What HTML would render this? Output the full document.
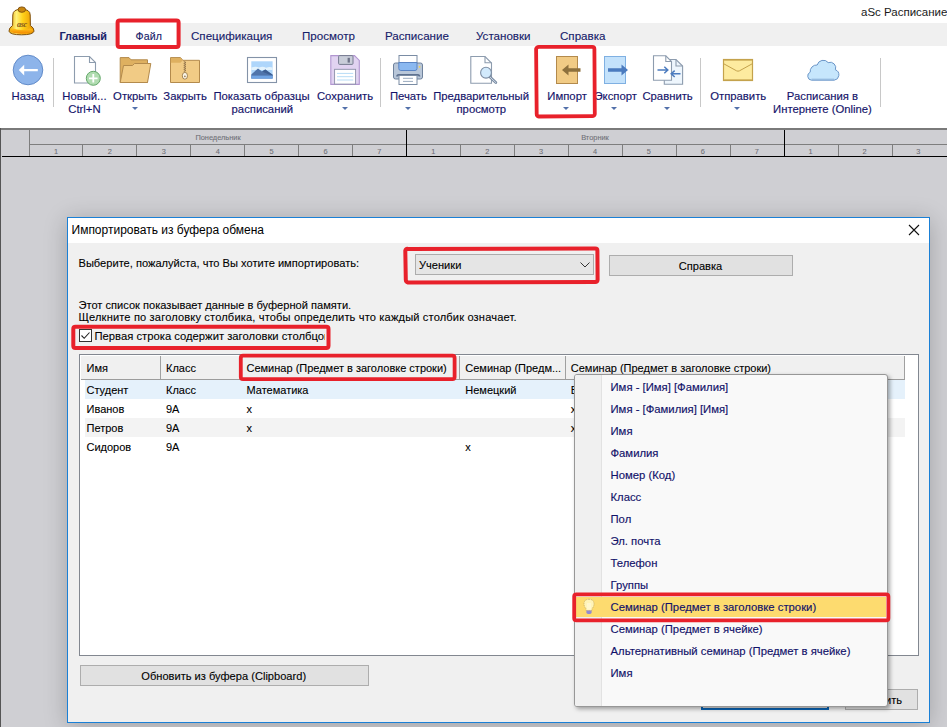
<!DOCTYPE html>
<html><head><meta charset="utf-8">
<style>
*{margin:0;padding:0;box-sizing:border-box}
html,body{width:947px;height:727px;overflow:hidden;background:#cfcfd3;font-family:"Liberation Sans",sans-serif}
.a{position:absolute}
.t{position:absolute;white-space:nowrap;line-height:1}
.c{transform:translateX(-50%)}
#titlebar{left:0;top:0;width:947px;height:23px;background:#fff}
#tabs{left:0;top:23px;width:947px;height:23px;background:#f0f0f0}
#ribbon{left:0;top:46px;width:947px;height:82px;background:#fff}
.tab{font-size:12px;color:#16206a;-webkit-text-stroke:0.12px #16206a}
.rl{font-size:11.3px;color:#14136a;text-align:center;-webkit-text-stroke:0.15px #14136a}
.sep{position:absolute;width:1px;background:#c8c8c8;top:58px;height:49px}
.arr{position:absolute;width:0;height:0;border-left:3.5px solid transparent;border-right:3.5px solid transparent;border-top:3.5px solid #5270aa;margin-left:0.5px;margin-top:1px}
.red{position:absolute;border:3px solid #e8212b;border-radius:3px}
.gl{position:absolute;background:#7e7e7e}
.gn{font-size:7.4px;color:#707178;-webkit-text-stroke:0.1px #707178}
.dt{font-size:11.1px;color:#000;-webkit-text-stroke:0.1px #000}
.lt{font-size:11px;color:#000;-webkit-text-stroke:0.1px #000}
.mt{font-size:11.3px;color:#12126a;-webkit-text-stroke:0.15px #12126a}
</style></head><body>
<div id="titlebar" class="a"></div>
<div id="tabs" class="a"></div>
<div id="ribbon" class="a"></div>
<!-- TITLE -->
<svg class="a" style="left:0;top:0" width="40" height="40" viewBox="0 0 40 40">
 <defs>
  <linearGradient id="bg1" x1="0" y1="0" x2="1" y2="0">
   <stop offset="0" stop-color="#e9a400"/><stop offset="0.3" stop-color="#fff17a"/><stop offset="0.55" stop-color="#ffd21a"/><stop offset="1" stop-color="#e69000"/>
  </linearGradient>
  <linearGradient id="bg2" x1="0" y1="0" x2="0" y2="1">
   <stop offset="0" stop-color="#ffc21a"/><stop offset="1" stop-color="#f28400"/>
  </linearGradient>
 </defs>
 <path d="M12.8 15 Q12.8 9.2 21.5 9.2 Q30.2 9.2 30.2 15 L30.4 25.5 Q34.3 28 34 31.2 Q33 34.8 21.5 34.8 Q10 34.8 9 31.2 Q8.7 28 12.6 25.5 Z" fill="url(#bg1)" stroke="#7e4e0c" stroke-width="1"/>
 <path d="M9.6 30.2 Q12 33.8 21.5 33.8 Q31 33.8 33.4 30.2 Q31.5 29 30 28.6 Q26 30 21.5 30 Q17 30 13 28.6 Q11.5 29 9.6 30.2Z" fill="url(#bg2)"/>
 <ellipse cx="21.8" cy="9.6" rx="3.8" ry="2.7" fill="#c8860f" stroke="#7a4a08" stroke-width="0.9"/>
 <text x="21.8" y="27" font-size="8.2" font-family="Liberation Serif" fill="#86561e" text-anchor="middle" font-weight="bold" font-style="italic" letter-spacing="-0.4">asc</text>
</svg>
<div class="t" style="left:861px;top:7.4px;font-size:11.5px;color:#1a1a1a">aSc Расписание</div>

<!-- TABS -->
<div class="t tab" style="left:59.5px;top:31.3px;font-weight:bold;color:#16226a;font-size:10.8px">Главный</div>
<div class="a" style="left:118px;top:23px;width:60px;height:23px;background:#fff"></div>
<div class="t tab" style="left:135.5px;top:30.5px;font-size:10.6px;letter-spacing:0.1px">Файл</div>
<div class="t tab" style="left:191px;top:29.5px;font-size:11.6px">Спецификация</div>
<div class="t tab" style="left:302px;top:29.5px;font-size:11.6px">Просмотр</div>
<div class="t tab" style="left:385px;top:29.5px;font-size:11.6px">Расписание</div>
<div class="t tab" style="left:476px;top:29.5px;font-size:11.6px">Установки</div>
<div class="t tab" style="left:560px;top:29.5px;font-size:11.6px">Справка</div>

<!-- RIBBON ICONS -->
<svg class="a" style="left:0;top:46px" width="947" height="82" viewBox="0 46 947 82">
 <!-- back -->
 <circle cx="28" cy="70" r="14.8" fill="#8db4ea" stroke="#5a84c4" stroke-width="0.9"/>
 <path d="M18.8 70.1 L24.2 64.8 L24.2 69 L37.8 69 L37.8 71.3 L24.2 71.3 L24.2 75.4 Z" fill="#fff"/>
 <!-- new -->
 <path d="M74.5 56.5 L89.5 56.5 L95.5 62.5 L95.5 83 L74.5 83 Z" fill="#fff" stroke="#8d9cae" stroke-width="1.1"/>
 <path d="M89.5 56.5 L89.5 62.5 L95.5 62.5" fill="none" stroke="#8d9cae" stroke-width="1.1"/>
 <circle cx="93.3" cy="78.3" r="7" fill="#b0dcb0" stroke="#64a86a" stroke-width="1"/>
 <path d="M93.3 74 V82.6 M89 78.3 H97.6" stroke="#fff" stroke-width="1.8"/>
 <!-- open folder -->
 <path d="M120.2 82.5 L120.2 57.6 L129 57.6 L131 59.8 L147.5 59.8 L147.5 82.5 Z" fill="#deb060" stroke="#b38a4c" stroke-width="1"/>
 <path d="M120.2 82.5 L123.5 65.5 L132.5 65.5 L134.5 63.5 L150.8 63.5 L147.5 82.5 Z" fill="#f1cb85" stroke="#b38a4c" stroke-width="1"/>
 <!-- zip folder -->
 <path d="M170.5 82.5 L170.5 57.6 L180.5 57.6 L182.8 60.3 L199.5 60.3 L199.5 82.5 Z" fill="#f1cb85" stroke="#b38a4c" stroke-width="1"/>
 <path d="M170.8 58 L180.5 58 L182.8 60.5 L180.3 62.8 L170.8 62.8 Z" fill="#deb060"/>
 <path d="M183.8 61.5 L186 62.5 L183.8 63.5 L186 64.5 L183.8 65.5 L186 66.5 L183.8 67.5 L186 68.5 L183.8 69.5 L186 70.5 L183.8 71.5" fill="none" stroke="#8f7048" stroke-width="0.9"/>
 <ellipse cx="184.9" cy="75.8" rx="2.6" ry="3.4" fill="#fbf6e8" stroke="#9a7a4a" stroke-width="0.9"/>
 <circle cx="184.9" cy="76.4" r="0.8" fill="#8f7048"/>
 <!-- picture -->
 <rect x="247.5" y="57.5" width="29" height="25" fill="#fff" stroke="#8493a8" stroke-width="1.1"/>
 <rect x="251.3" y="61.3" width="21.3" height="17.3" fill="#aed6fb"/>
 <path d="M251.3 67.5 Q256 65.8 259 67.5 Q263 66 266 67.8 Q269.5 66.3 272.6 67.5 L272.6 70 L251.3 70 Z" fill="#e3f3fd"/>
 <path d="M251.3 74.5 L258 68.6 L262 71.5 L265.3 69.5 L272.6 74.8 L272.6 78.6 L251.3 78.6 Z" fill="#4f74ab"/>
 <path d="M262 71.5 L265.3 69.5 L272.6 74.8 L272.6 76 Z" fill="#3d5f93"/>
 <rect x="251.3" y="75.6" width="21.3" height="3" fill="#6fa3e3"/>
 <!-- floppy -->
 <path d="M330.8 55.6 L354.5 55.6 L359.3 60.4 L359.3 84.4 L330.8 84.4 Z" fill="#e1d3f1" stroke="#b196d0" stroke-width="1.1"/>
 <rect x="338.6" y="55.6" width="14.4" height="8.8" rx="1" fill="#c9cdd9" stroke="#767b90" stroke-width="1"/>
 <rect x="347.6" y="57.8" width="2.3" height="4.8" fill="#6e7388"/>
 <rect x="334.6" y="69.3" width="21" height="14.8" fill="#fff" stroke="#8b8fa8" stroke-width="0.9"/>
 <path d="M337 73.4 H353.2 M337 76.7 H353.2 M337 80 H353.2" stroke="#b7dcf6" stroke-width="1"/>
 <!-- printer -->
 <rect x="393.5" y="63" width="29" height="16" rx="2" fill="#b9c7d9" stroke="#6f829c" stroke-width="1"/>
 <rect x="399" y="55.5" width="18" height="7.5" fill="#fff" stroke="#7a8ca4" stroke-width="1"/>
 <path d="M398.8 62.5 H417 V68.5 Q417 70.5 415 70.5 H400.8 Q398.8 70.5 398.8 68.5 Z" fill="#8ab8f0" stroke="#5a84c4" stroke-width="1"/>
 <circle cx="419.6" cy="66.8" r="0.9" fill="#f7d54a"/>
 <path d="M397 76.5 Q397 74.8 398.8 74.8 H417.8 Q419.5 74.8 419.5 76.5" stroke="#5f7290" stroke-width="1.7" fill="none"/>
 <rect x="399" y="75.5" width="18" height="9" fill="#fff" stroke="#7a8ca4" stroke-width="1"/>
 <path d="M403 78.3 H413 M403 81.4 H413" stroke="#9aabbf" stroke-width="1"/>
 <!-- preview -->
 <path d="M470.8 56.5 L485 56.5 L491.5 63 L491.5 83.3 L470.8 83.3 Z" fill="#fff" stroke="#8d9cae" stroke-width="1.1"/>
 <path d="M485 56.5 L485 62.8 L491.5 62.8" fill="none" stroke="#8d9cae" stroke-width="1.1"/>
 <path d="M490.2 77.3 L495.8 82.6" stroke="#7d8ea4" stroke-width="2.8" stroke-linecap="round"/>
 <path d="M490.2 77.3 L495.8 82.6" stroke="#c9d6e4" stroke-width="1" stroke-linecap="round"/>
 <circle cx="486" cy="72.7" r="5.4" fill="#d2eafc" stroke="#7d8ea4" stroke-width="1.1"/>
 <!-- import -->
 <rect x="556.5" y="56.5" width="21" height="27" fill="#f1cb85" stroke="#b38a4c" stroke-width="1"/>
 <path d="M562 70 L568.5 64.5 L568.5 68.3 L580.5 68.3 L580.5 71.8 L568.5 71.8 L568.5 75.5 Z" fill="#8d703c"/>
 <!-- export -->
 <rect x="604.5" y="56.5" width="21" height="27" fill="#c4e2fb" stroke="#7fb0e2" stroke-width="1"/>
 <path d="M628 70 L621.5 64.5 L621.5 68.3 L608 68.3 L608 71.8 L621.5 71.8 L621.5 75.5 Z" fill="#4b7bbf"/>
 <!-- compare -->
 <path d="M664.3 59.5 L676 59.5 L682.6 66 L682.6 84.2 L664.3 84.2 Z" fill="#eef6fd" stroke="#8d9cae" stroke-width="1.1"/>
 <path d="M676 59.5 L676 66 L682.6 66" fill="none" stroke="#8d9cae" stroke-width="1.1"/>
 <path d="M653.5 55.8 L665.8 55.8 L671.5 61.5 L671.5 80.3 L653.5 80.3 Z" fill="#fff" stroke="#8d9cae" stroke-width="1.1"/>
 <path d="M665.8 55.8 L665.8 61.5 L671.5 61.5" fill="none" stroke="#8d9cae" stroke-width="1.1"/>
 <path d="M657.5 70 H667.5 M664.3 66.8 L667.8 70 L664.3 73.2" fill="none" stroke="#4b7bbf" stroke-width="1.5"/>
 <path d="M680.5 73.8 H671.5 M674.7 70.6 L671.2 73.8 L674.7 77" fill="none" stroke="#4b7bbf" stroke-width="1.5"/>
 <!-- envelope -->
 <rect x="723.5" y="59.5" width="29" height="21" fill="#fdeb9f" stroke="#c4a24c" stroke-width="1.2"/>
 <rect x="724" y="60" width="28" height="1" fill="#d9bd6a"/><rect x="724" y="79" width="28" height="1" fill="#d9bd6a"/>
 <path d="M723.8 63.8 L736.5 70.8 Q738 71.6 739.5 70.8 L752.2 63.8" fill="none" stroke="#c4a24c" stroke-width="1"/>
 <!-- cloud -->
 <path d="M811.5 80.2 A4.2 4.2 0 0 1 810.2 72.2 A6.5 6.5 0 0 1 817.2 65 A6.3 6.3 0 0 1 828.2 62.6 A5.6 5.6 0 0 1 835.4 69.8 A5.4 5.4 0 0 1 834.2 80.2 Z" fill="#c6e6fc" stroke="#6b96c8" stroke-width="1"/><path d="M811.5 79.2 H834.2" stroke="#8fb2da" stroke-width="1"/>
</svg>
<div class="sep" style="left:53px"></div>
<div class="sep" style="left:380px"></div>
<div class="sep" style="left:700px"></div>
<div class="sep" style="left:880px"></div>

<!-- RIBBON LABELS -->
<div class="t rl c" style="left:27.7px;top:90.6px">Назад</div>
<div class="t rl c" style="left:84.4px;top:90.6px">Новый...</div>
<div class="t rl c" style="left:84.4px;top:104.4px">Ctrl+N</div>
<div class="t rl c" style="left:135.3px;top:90.6px">Открыть</div>
<div class="arr" style="left:131px;top:106px"></div>
<div class="t rl c" style="left:185.1px;top:90.6px">Закрыть</div>
<div class="t rl c" style="left:261.5px;top:90.6px">Показать образцы</div>
<div class="t rl c" style="left:262.3px;top:104.4px">расписаний</div>
<div class="t rl c" style="left:345px;top:90.6px">Сохранить</div>
<div class="arr" style="left:341px;top:106px"></div>
<div class="t rl c" style="left:408.4px;top:90.6px">Печать</div>
<div class="arr" style="left:404px;top:106px"></div>
<div class="t rl c" style="left:481.1px;top:90.6px">Предварительный</div>
<div class="t rl c" style="left:481.3px;top:104.4px">просмотр</div>
<div class="t rl c" style="left:567.1px;top:90.6px">Импорт</div>
<div class="arr" style="left:562.5px;top:106px"></div>
<div class="t rl c" style="left:615.7px;top:90.6px">Экспорт</div>
<div class="arr" style="left:610.5px;top:106px"></div>
<div class="t rl c" style="left:667.6px;top:90.6px">Сравнить</div>
<div class="arr" style="left:663.5px;top:106px"></div>
<div class="t rl c" style="left:738.2px;top:90.6px">Отправить</div>
<div class="arr" style="left:733.5px;top:106px"></div>
<div class="t rl c" style="left:822.5px;top:90.6px">Расписания в</div>
<div class="t rl c" style="left:822.5px;top:104.4px">Интернете (Online)</div>

<!-- GRID -->
<div class="a" style="left:0;top:128px;width:947px;height:2px;background:#7a7a7a"></div>
<div class="a" style="left:0;top:128px;width:1px;height:599px;background:#555"></div>
<div class="gl" style="left:29px;top:130px;width:1px;height:26px"></div>
<div class="gl" style="left:29px;top:144px;width:918px;height:1px"></div>
<div class="a" style="left:2px;top:156px;width:945px;height:1px;background:#000"></div>
<div class="a" style="left:406px;top:130px;width:1px;height:27px;background:#000"></div>
<div class="a" style="left:784px;top:130px;width:1px;height:27px;background:#000"></div>
<div class="gl" style="left:82px;top:144px;width:1px;height:12px"></div><div class="gl" style="left:136px;top:144px;width:1px;height:12px"></div><div class="gl" style="left:190px;top:144px;width:1px;height:12px"></div><div class="gl" style="left:244px;top:144px;width:1px;height:12px"></div><div class="gl" style="left:298px;top:144px;width:1px;height:12px"></div><div class="gl" style="left:352px;top:144px;width:1px;height:12px"></div><div class="gl" style="left:460px;top:144px;width:1px;height:12px"></div><div class="gl" style="left:514px;top:144px;width:1px;height:12px"></div><div class="gl" style="left:568px;top:144px;width:1px;height:12px"></div><div class="gl" style="left:622px;top:144px;width:1px;height:12px"></div><div class="gl" style="left:676px;top:144px;width:1px;height:12px"></div><div class="gl" style="left:730px;top:144px;width:1px;height:12px"></div><div class="gl" style="left:838px;top:144px;width:1px;height:12px"></div><div class="gl" style="left:892px;top:144px;width:1px;height:12px"></div><div class="t gn c" style="left:56.0px;top:148px">1</div><div class="t gn c" style="left:109.9px;top:148px">2</div><div class="t gn c" style="left:163.8px;top:148px">3</div><div class="t gn c" style="left:217.7px;top:148px">4</div><div class="t gn c" style="left:271.6px;top:148px">5</div><div class="t gn c" style="left:325.5px;top:148px">6</div><div class="t gn c" style="left:379.4px;top:148px">7</div><div class="t gn c" style="left:433.3px;top:148px">1</div><div class="t gn c" style="left:487.2px;top:148px">2</div><div class="t gn c" style="left:541.1px;top:148px">3</div><div class="t gn c" style="left:595.0px;top:148px">4</div><div class="t gn c" style="left:648.9px;top:148px">5</div><div class="t gn c" style="left:702.8px;top:148px">6</div><div class="t gn c" style="left:756.7px;top:148px">7</div><div class="t gn c" style="left:810.6px;top:148px">1</div><div class="t gn c" style="left:864.5px;top:148px">2</div><div class="t gn c" style="left:918.4px;top:148px">3</div>
<div class="t gn c" style="left:218px;top:134px">Понедельник</div>
<div class="t gn c" style="left:595px;top:134px">Вторник</div>

<!-- DIALOG -->
<div class="a" style="left:67px;top:217px;width:863px;height:506px;border:1px solid #1a80d6;background:#f0f0f0;box-shadow:0 3px 22px rgba(0,0,0,0.22)"></div>
<div class="a" style="left:68px;top:218px;width:861px;height:25px;background:#fff"></div>
<div class="t" style="left:71.5px;top:224px;font-size:12px;color:#000">Импортировать из буфера обмена</div>
<svg class="a" style="left:908px;top:224px" width="12" height="12" viewBox="0 0 12 12"><path d="M1 1 L11 11 M11 1 L1 11" stroke="#111" stroke-width="1.1"/></svg>

<div class="t dt" style="left:78.5px;top:257.7px">Выберите, пожалуйста, что Вы хотите импортировать:</div>
<div class="a" style="left:415px;top:254px;width:179px;height:21px;background:#e5e5e5;border:1px solid #acacac"></div>
<div class="t dt" style="left:419px;top:259.7px">Ученики</div>
<svg class="a" style="left:579px;top:261px" width="12" height="8" viewBox="0 0 12 8"><path d="M1.5 1.5 L6 6 L10.5 1.5" fill="none" stroke="#333" stroke-width="1"/></svg>
<div class="a" style="left:609px;top:255px;width:184px;height:21px;background:#e1e1e1;border:1px solid #adadad"></div>
<div class="t dt c" style="left:700.5px;top:260.5px">Справка</div>

<div class="t dt" style="left:78.5px;top:299.7px">Этот список показывает данные в буферной памяти.</div>
<div class="t dt" style="left:78.5px;top:311.7px;letter-spacing:0.15px">Щелкните по заголовку столбика, чтобы определить что каждый столбик означает.</div>
<div class="a" style="left:79px;top:329px;width:13px;height:13px;background:#fff;border:1px solid #333"></div>
<svg class="a" style="left:79px;top:329px" width="13" height="13" viewBox="0 0 13 13"><path d="M2.5 6.5 L5.2 9.3 L10.5 3.5" fill="none" stroke="#222" stroke-width="1.1"/></svg>
<div class="a" style="left:94px;top:328px;width:231px;height:16px;overflow:hidden"><div class="t dt" style="left:0.5px;top:3.3px;font-size:11.25px">Первая строка содержит заголовки столбцов</div></div>

<!-- LISTVIEW -->
<div class="a" style="left:79px;top:354px;width:840px;height:302px;background:#fff;border:1px solid #828790"></div>
<div class="a" style="left:81px;top:356px;width:824px;height:24px;background:#f0f0f0;border-bottom:1px solid #9c9c9c"></div>
<div class="a" style="left:160px;top:356px;width:1px;height:23px;background:#a0a0a0"></div>
<div class="a" style="left:240px;top:356px;width:1px;height:23px;background:#a0a0a0"></div>
<div class="a" style="left:459px;top:356px;width:1px;height:23px;background:#a0a0a0"></div>
<div class="a" style="left:565px;top:356px;width:1px;height:23px;background:#a0a0a0"></div>
<div class="a" style="left:904px;top:356px;width:1px;height:23px;background:#a0a0a0"></div>
<div class="t lt" style="left:86.5px;top:362.9px">Имя</div>
<div class="t lt" style="left:166px;top:362.9px">Класс</div>
<div class="t lt" style="left:246.5px;top:362.9px">Семинар (Предмет в заголовке строки)</div>
<div class="t lt" style="left:465.3px;top:362.9px">Семинар (Предм...</div>
<div class="t lt" style="left:570.8px;top:362.9px">Семинар (Предмет в заголовке строки)</div>

<div class="a" style="left:85px;top:380px;width:820px;height:19px;background:#e5f1fb"></div>
<div class="a" style="left:85px;top:418px;width:820px;height:19px;background:#f3f3f3"></div>
<div class="t lt" style="left:86.5px;top:385px">Студент</div>
<div class="t lt" style="left:166px;top:385px">Класс</div>
<div class="t lt" style="left:246.5px;top:385px">Математика</div>
<div class="t lt" style="left:465.3px;top:385px">Немецкий</div>
<div class="t lt" style="left:570.8px;top:385px">Время</div>
<div class="t lt" style="left:86.5px;top:404.1px">Иванов</div>
<div class="t lt" style="left:166px;top:404.1px">9A</div>
<div class="t lt" style="left:246.5px;top:404.1px">x</div>
<div class="t lt" style="left:570.8px;top:404.1px">x</div>
<div class="t lt" style="left:86.5px;top:423.1px">Петров</div>
<div class="t lt" style="left:166px;top:423.1px">9A</div>
<div class="t lt" style="left:246.5px;top:423.1px">x</div>
<div class="t lt" style="left:570.8px;top:423.1px">x</div>
<div class="t lt" style="left:86.5px;top:442.1px">Сидоров</div>
<div class="t lt" style="left:166px;top:442.1px">9A</div>
<div class="t lt" style="left:465.3px;top:442.1px">x</div>

<!-- bottom buttons -->
<div class="a" style="left:80px;top:665px;width:289px;height:21px;background:#e1e1e1;border:1px solid #adadad"></div>
<div class="t dt c" style="left:223.7px;top:670.5px">Обновить из буфера (Clipboard)</div>
<div class="a" style="left:701px;top:689px;width:128px;height:21px;background:#e1e1e1;border:2px solid #0a64b4"></div>
<div class="a" style="left:845px;top:689px;width:73px;height:21px;background:#e1e1e1;border:1px solid #adadad"></div>
<div class="t dt" style="right:45px;top:694.5px">Отменить</div>

<!-- POPUP -->
<div class="a" style="left:574px;top:374px;width:314px;height:333px;background:#f9f9f9;border:1px solid #979797;border-radius:3px;box-shadow:2px 2px 4px rgba(0,0,0,0.35)"></div>
<div class="a" style="left:575px;top:375px;width:26px;height:331px;background:#f0f0f0;border-radius:2px 0 0 2px"></div>
<div class="a" style="left:601px;top:375px;width:1px;height:331px;background:#e2e2e2"></div>
<div class="a" style="left:576px;top:597px;width:310px;height:20px;background:#fddb6f"></div>
<svg class="a" style="left:582px;top:598px" width="14" height="18" viewBox="0 0 14 18">
 <path d="M7 1.3 Q12 1.3 12 6 Q12 8.5 10.2 10.4 L9.8 12.6 L4.2 12.6 L3.8 10.4 Q2 8.5 2 6 Q2 1.3 7 1.3Z" fill="#fff4b8" stroke="#b8a060" stroke-width="0.7" stroke-dasharray="1 0.8"/>
 <path d="M6 5 V11.5 M8 5 V11.5" stroke="#fffbe8" stroke-width="0.9"/>
 <path d="M4.4 12.6 H9.6 V14.6 Q9.6 16 8 16 H6 Q4.4 16 4.4 14.6 Z" fill="#918ad2"/>
</svg>
<div class="t mt" style="left:610.5px;top:381.7px">Имя - [Имя] [Фамилия]</div>
<div class="t mt" style="left:610.5px;top:403.7px">Имя - [Фамилия] [Имя]</div>
<div class="t mt" style="left:610.5px;top:425.7px">Имя</div>
<div class="t mt" style="left:610.5px;top:447.7px">Фамилия</div>
<div class="t mt" style="left:610.5px;top:469.7px">Номер (Код)</div>
<div class="t mt" style="left:610.5px;top:491.7px">Класс</div>
<div class="t mt" style="left:610.5px;top:513.7px">Пол</div>
<div class="t mt" style="left:610.5px;top:535.7px">Эл. почта</div>
<div class="t mt" style="left:610.5px;top:557.7px">Телефон</div>
<div class="t mt" style="left:610.5px;top:579.7px">Группы</div>
<div class="t mt" style="left:610.5px;top:601.7px">Семинар (Предмет в заголовке строки)</div>
<div class="t mt" style="left:610.5px;top:623.7px">Семинар (Предмет в ячейке)</div>
<div class="t mt" style="left:610.5px;top:645.7px">Альтернативный семинар (Предмет в ячейке)</div>
<div class="t mt" style="left:610.5px;top:667.7px">Имя</div>

<!-- RED ANNOTATIONS -->
<svg class="a" style="left:0;top:0" width="947" height="727" viewBox="0 0 947 727">
<path d="M119.8 20.4 L176.4 20.4 Q178.6 20.4 178.6 22.599999999999998 L178.6 44.8 Q178.6 47.0 176.4 47.0 L119.8 47.0 Q117.6 47.0 117.6 44.8 L117.6 22.599999999999998 Q117.6 20.4 119.8 20.4 Z" fill="none" stroke="#e8212b" stroke-width="4" stroke-linejoin="round"/>
<path d="M538.9000000000001 46.8 L592.1999999999999 46.8 Q594.4 46.8 594.4 49.0 L594.8 114.0 Q594.4 116.2 592.1999999999999 116.2 L538.9000000000001 116.5 Q536.7 116.2 536.7 114.0 L536.1 49.0 Q536.7 46.8 538.9000000000001 46.8 Z" fill="none" stroke="#e8212b" stroke-width="3.8" stroke-linejoin="round"/>
<path d="M408.0 248.9 L595.1999999999999 248.6 Q597.4 248.6 597.4 250.79999999999998 L597.6 279.8 Q597.4 282.0 595.1999999999999 282.0 L408.0 282.5 Q405.8 282.0 405.8 279.8 L405.3 250.79999999999998 Q405.8 248.6 408.0 248.9 Z" fill="none" stroke="#e8212b" stroke-width="4" stroke-linejoin="round"/>
<path d="M75.5 326.8 L326.3 326.8 Q328.5 326.8 328.5 329.0 L328.5 345.7 Q328.5 347.9 326.3 347.9 L75.5 347.9 Q73.3 347.9 73.3 345.7 L73.3 329.0 Q73.3 326.8 75.5 326.8 Z" fill="none" stroke="#e8212b" stroke-width="4" stroke-linejoin="round"/>
<path d="M243.0 355.7 L452.40000000000003 355.7 Q454.6 355.7 454.6 357.9 L454.6 376.90000000000003 Q454.6 379.1 452.40000000000003 379.1 L243.0 379.1 Q240.8 379.1 240.8 376.90000000000003 L240.8 357.9 Q240.8 355.7 243.0 355.7 Z" fill="none" stroke="#e8212b" stroke-width="3.8" stroke-linejoin="round"/>
<path d="M576.4000000000001 594.4 L886.1999999999999 594.4 Q888.4 594.4 888.4 596.6 L888.4 618.1999999999999 Q888.4 620.4 886.1999999999999 620.4 L576.4000000000001 620.4 Q574.2 620.4 574.2 618.1999999999999 L574.2 596.6 Q574.2 594.4 576.4000000000001 594.4 Z" fill="none" stroke="#e8212b" stroke-width="3.8" stroke-linejoin="round"/>
</svg>
</body></html>
